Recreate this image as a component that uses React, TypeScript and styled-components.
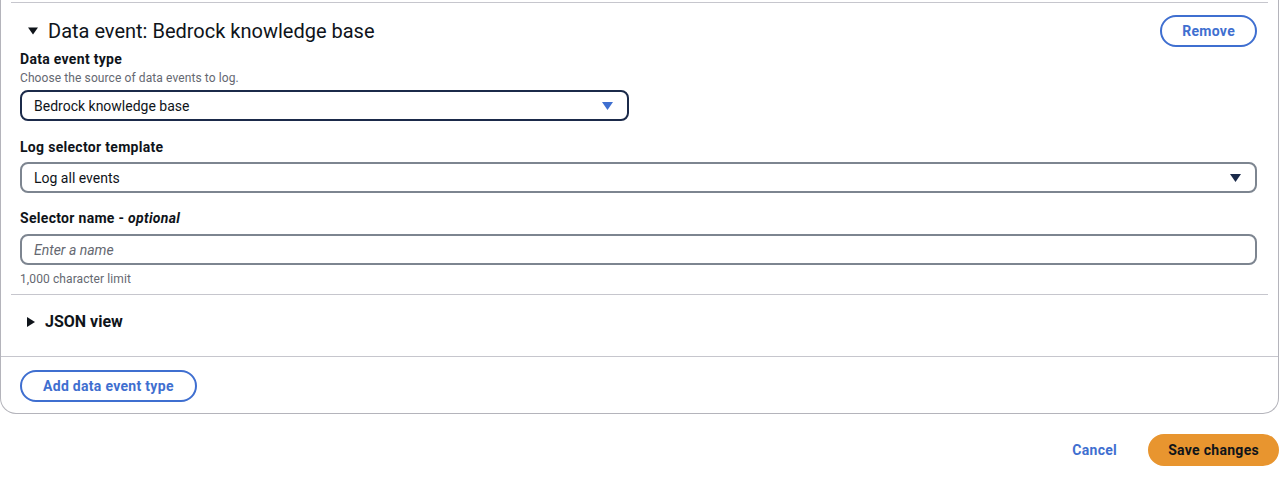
import React from "react";
import styled, { createGlobalStyle } from "styled-components";

const Global = createGlobalStyle`
  html, body { margin: 0; padding: 0; background: #ffffff; }
  body { font-family: Roboto, "Open Sans", Arial, sans-serif; color: #0f141a; }
  * { box-sizing: border-box; }
`;

const BLUE = "#3f6fd0";
const INK = "#0f141a";
const MUTED = "#656871";
const LINE = "#c6c6cd";

const Page = styled.div`
  width: 1282px;
  display: flex;
  flex-direction: column;
`;

const Card = styled.div`
  width: 1279px;
  border: 1px solid #b4b4bb;
  border-top: none;
  border-radius: 0 0 16px 16px;
  display: flex;
  flex-direction: column;
`;

const Divider = styled.div<{ $inset?: boolean; $top?: number }>`
  height: 1px;
  background: ${LINE};
  margin: ${(p) => p.$top ?? 0}px ${(p) => (p.$inset ? 10 : 0)}px 0;
`;

const Item = styled.div`
  padding: 0 21px 0 19px;
  display: flex;
  flex-direction: column;
`;

const HeaderRow = styled.div`
  display: flex;
  align-items: center;
  justify-content: space-between;
  padding: 12px 0 1px 8px;
`;

const Heading = styled.h2`
  margin: 0;
  display: flex;
  align-items: center;
  gap: 10px;
  font-size: 20px;
  font-weight: 400;
  line-height: 24px;
  color: ${INK};
`;

const Caret = styled.svg<{ $color?: string }>`
  flex: none;
  fill: ${(p) => p.$color ?? INK};
`;

const PillButton = styled.button<{ $primary?: boolean }>`
  height: 32px;
  padding: 0 ${(p) => (p.$primary ? 18 : 20)}px;
  border-radius: 20px;
  border: 2px solid ${(p) => (p.$primary ? "#e8952f" : BLUE)};
  background: ${(p) => (p.$primary ? "#e8952f" : "#ffffff")};
  color: ${(p) => (p.$primary ? INK : BLUE)};
  font-family: inherit;
  font-size: 14px;
  font-weight: 700;
  letter-spacing: 0.3px;
  line-height: 20px;
  cursor: pointer;
`;

const LinkButton = styled.button`
  border: none;
  background: none;
  padding: 0;
  color: ${BLUE};
  font-family: inherit;
  font-size: 14px;
  font-weight: 700;
  letter-spacing: 0.3px;
  cursor: pointer;
`;

const Field = styled.div<{ $top: number }>`
  display: flex;
  flex-direction: column;
  margin-top: ${(p) => p.$top}px;
`;

const Label = styled.label`
  font-size: 14px;
  font-weight: 700;
  letter-spacing: 0.3px;
  line-height: 22px;
  color: ${INK};
  em { font-style: italic; }
`;

const Description = styled.div`
  font-size: 12px;
  line-height: 16px;
  letter-spacing: 0.1px;
  color: ${MUTED};
`;

const Control = styled.div<{ $focused?: boolean; $width?: number; $gap: number }>`
  margin-top: ${(p) => p.$gap}px;
  width: ${(p) => (p.$width ? `${p.$width}px` : "100%")};
  height: 31px;
  border: 2px solid ${(p) => (p.$focused ? "#1b2a4a" : "#7d8590")};
  border-radius: 8px;
  display: flex;
  align-items: center;
  justify-content: space-between;
  padding: 0 14px 0 12px;
  font-size: 14px;
  color: ${INK};
`;

const Placeholder = styled.span`
  font-style: italic;
  color: #656871;
`;

const Constraint = styled.div`
  margin-top: 6px;
  font-size: 12px;
  line-height: 16px;
  letter-spacing: 0.1px;
  color: ${MUTED};
`;

const Expander = styled.div`
  display: flex;
  align-items: center;
  gap: 10px;
  padding: 16px 0 23px 7px;
  font-size: 16px;
  font-weight: 700;
  line-height: 22px;
`;

const CardFooter = styled.div`
  padding: 13px 19px 11px;
  display: flex;
`;

const AddButton = styled(PillButton)`
  padding: 0 21px;
`;

const Actions = styled.div`
  display: flex;
  justify-content: flex-end;
  align-items: center;
  gap: 31px;
  padding-top: 20px;
  width: 1279px;
`;

export default function App() {
  return (
    <Page>
      <Global />
      <Card>
        <Divider $inset $top={2} />
        <Item>
          <HeaderRow>
            <Heading>
              <Caret width="10" height="8" viewBox="0 0 10 8">
                <path d="M0 0.5 L10 0.5 L5 7.5 Z" />
              </Caret>
              Data event: Bedrock knowledge base
            </Heading>
            <PillButton>Remove</PillButton>
          </HeaderRow>
          <Field $top={0}>
            <Label>Data event type</Label>
            <Description>Choose the source of data events to log.</Description>
            <Control $focused $width={609} $gap={4}>
              <span>Bedrock knowledge base</span>
              <Caret $color="#3f6fd0" width="11" height="8" viewBox="0 0 11 8">
                <path d="M0 0 L11 0 L5.5 8 Z" />
              </Caret>
            </Control>
          </Field>
          <Field $top={15}>
            <Label>Log selector template</Label>
            <Control $gap={4}>
              <span>Log all events</span>
              <Caret $color="#1b2a4a" width="11" height="8" viewBox="0 0 11 8">
                <path d="M0 0 L11 0 L5.5 8 Z" />
              </Caret>
            </Control>
          </Field>
          <Field $top={14}>
            <Label>
              Selector name - <em>optional</em>
            </Label>
            <Control $gap={5}>
              <Placeholder>Enter a name</Placeholder>
            </Control>
            <Constraint>1,000 character limit</Constraint>
          </Field>
        </Item>
        <Divider $inset $top={7} />
        <Item>
          <Expander>
            <Caret width="8" height="10" viewBox="0 0 8 10">
              <path d="M0 0 L8 5 L0 10 Z" />
            </Caret>
            JSON view
          </Expander>
        </Item>
        <Divider />
        <CardFooter>
          <AddButton>Add data event type</AddButton>
        </CardFooter>
      </Card>
      <Actions>
        <LinkButton>Cancel</LinkButton>
        <PillButton $primary>Save changes</PillButton>
      </Actions>
    </Page>
  );
}
